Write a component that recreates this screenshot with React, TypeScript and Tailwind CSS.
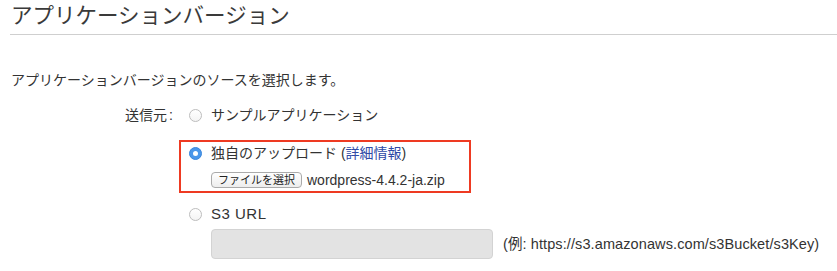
import React from "react";

const font = { fontFamily: '"Liberation Sans", "Noto Sans CJK JP", sans-serif' };

function Radio({ checked }: { checked?: boolean }) {
  if (checked) {
    return (
      <span className="flex h-[13px] w-[13px] shrink-0 items-center justify-center rounded-full border border-[#3a86dc] bg-[#4a97ea]">
        <span className="h-[5px] w-[5px] rounded-full bg-white" />
      </span>
    );
  }
  return (
    <span className="h-[13px] w-[13px] shrink-0 rounded-full border border-[#bdbdbd] bg-gradient-to-b from-white to-[#f4f4f4]" />
  );
}

export default function App() {
  return (
    <div className="h-[271px] w-[837px] overflow-hidden bg-white text-[#333]" style={font}>
      <div className="ml-[10px] border-b border-[#cfcfcf] pb-[5px] pl-[1px] pt-[3px]">
        <h1 className="text-[21.5px] leading-[26px] font-normal text-[#3a3a3a]">アプリケーションバージョン</h1>
      </div>

      <p className="ml-[11px] mt-[35px] text-[14px] leading-[20px]">アプリケーションバージョンのソースを選択します。</p>

      <div className="mt-[15px] flex">
        <div className="w-[177px] shrink-0 text-right text-[14px] leading-[20px]">
          送信元<span className="ml-[2px] mr-[4px]">:</span>
        </div>
        <div className="ml-[2px] flex flex-col">
          <label className="flex h-[20px] items-center gap-[9px] pl-[10px] text-[14px] leading-[20px]">
            <Radio />
            <span>サンプルアプリケーション</span>
          </label>

          <div className="mt-[15px] w-[292px] border-2 border-[#ee3a22] pb-[3px] pl-[8px] pt-[1px]">
            <label className="flex h-[20px] items-center gap-[9px] text-[14px] leading-[20px]">
              <Radio checked />
              <span>
                独自のアップロード (<span className="text-[#2f4aa6]">詳細情報</span>)
              </span>
            </label>
            <div className="ml-[22px] mt-[9px] flex h-[16px] items-center">
              <span className="flex h-[16px] items-center rounded-[4px] border border-[#aaaaaa] bg-gradient-to-b from-white to-[#ededed] px-[6px] text-[11px] leading-[14px] text-[#222]">
                ファイルを選択
              </span>
              <span className="ml-[5px] text-[14px] leading-[16px]">wordpress-4.4.2-ja.zip</span>
            </div>
          </div>

          <label className="mt-[11px] flex h-[20px] items-center gap-[9px] pl-[10px] leading-[20px]">
            <Radio />
            <span className="text-[15px] tracking-[0.5px]">S3 URL</span>
          </label>

          <div className="ml-[32px] mt-[5px] flex items-center">
            <div className="h-[30px] w-[282px] rounded-[4px] border border-[#d3d3d3] bg-[#e3e3e3]" />
            <span className="ml-[10px] text-[14.5px] tracking-[0.1px] leading-[20px]">(例: https://s3.amazonaws.com/s3Bucket/s3Key)</span>
          </div>
        </div>
      </div>
    </div>
  );
}
